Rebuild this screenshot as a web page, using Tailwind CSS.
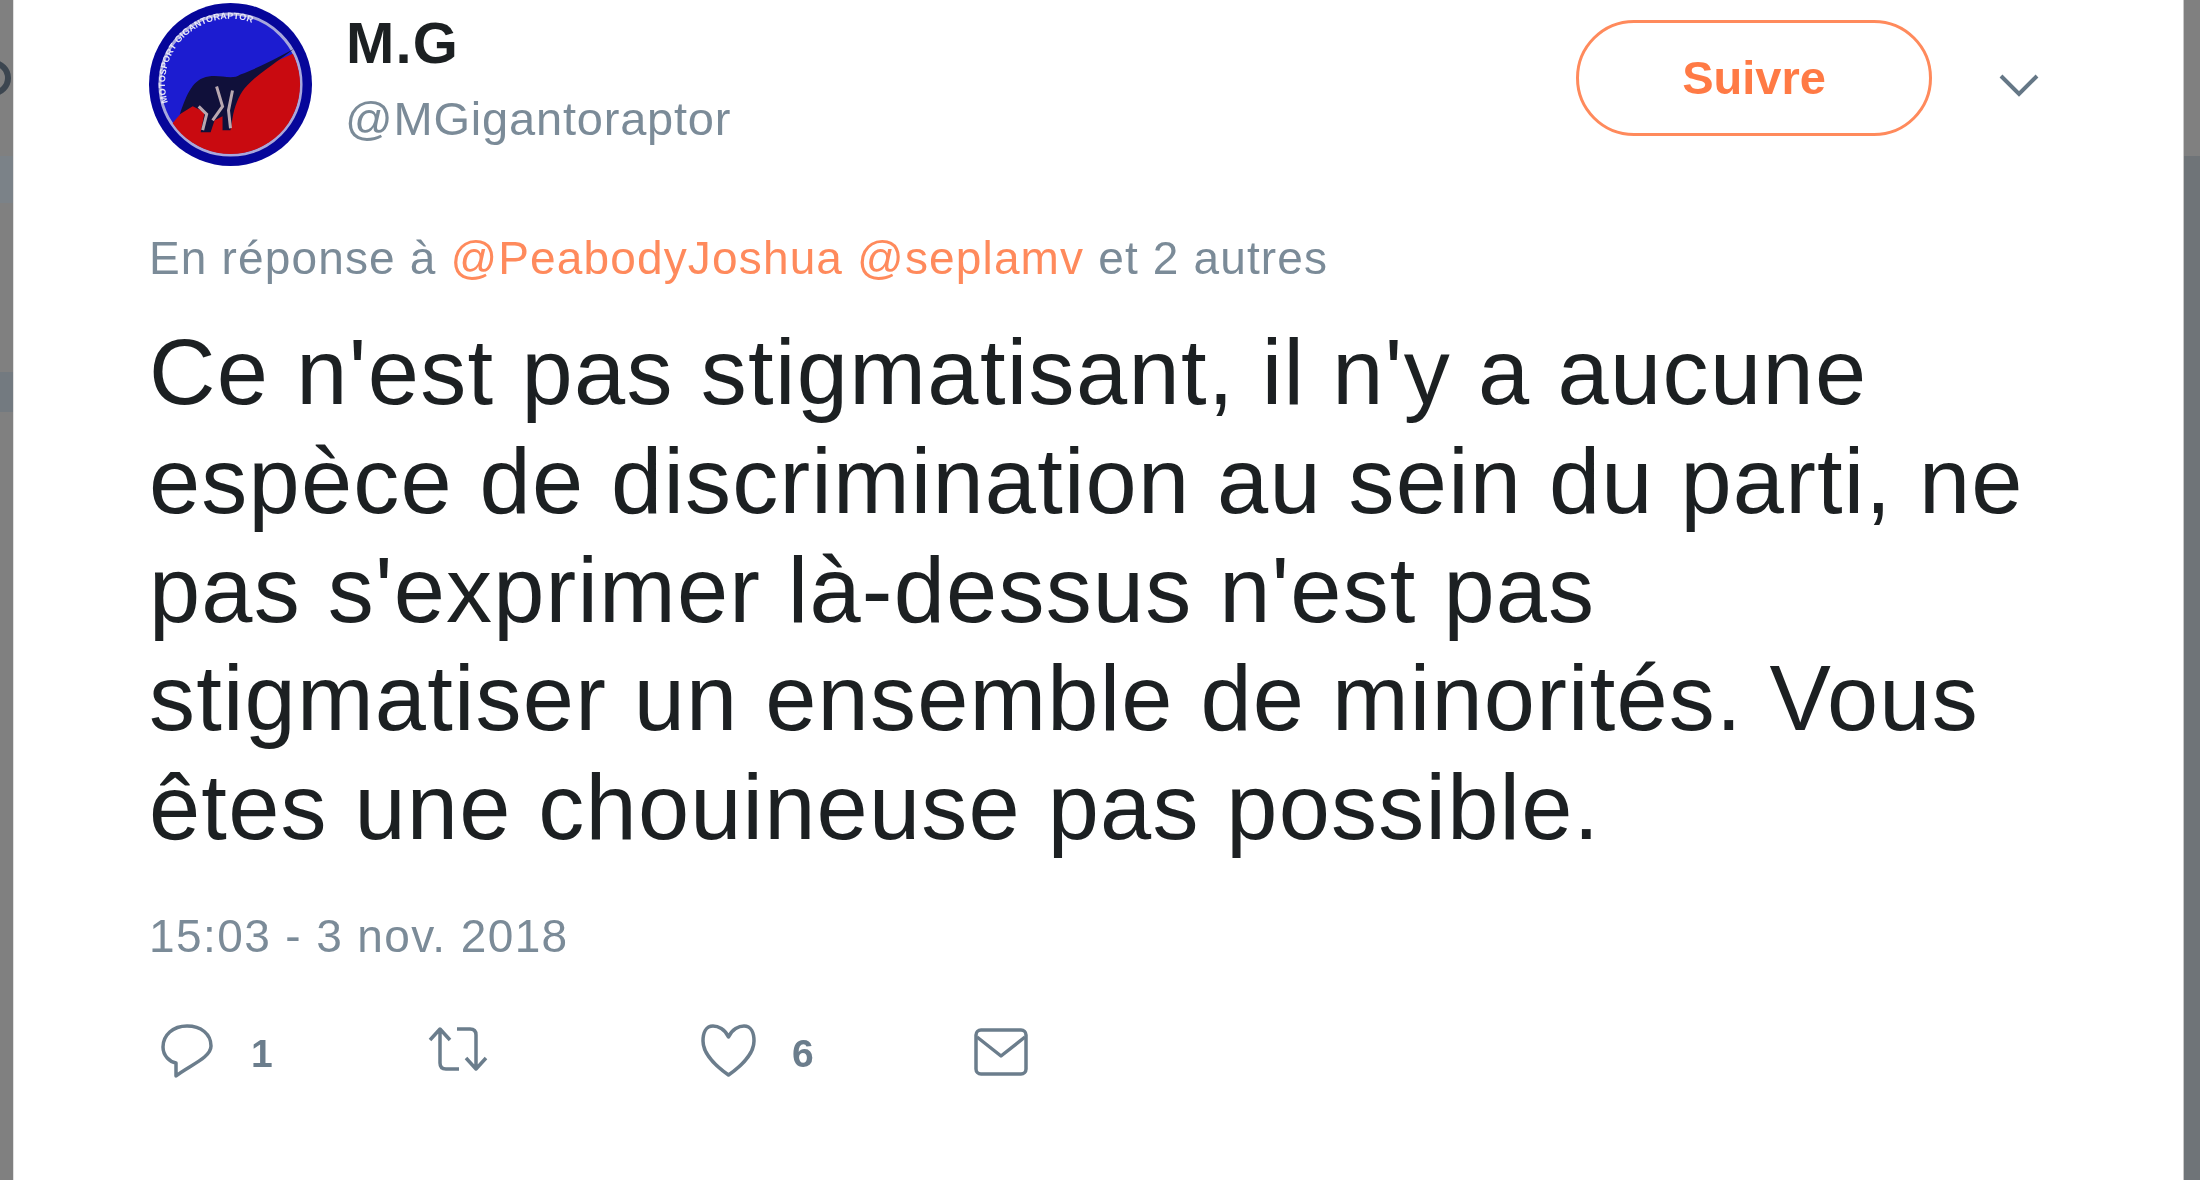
<!DOCTYPE html>
<html><head><meta charset="utf-8"><script src="https://cdn.jsdelivr.net/npm/@tailwindcss/browser@4"></script></head>
<body class="m-0 bg-[#808080] overflow-hidden font-['Liberation_Sans',Arial,sans-serif]">
<div class="w-[2200px] h-[1180px] flex blur-[0.7px]">
  <div class="w-[13px] shrink-0 flex flex-col bg-[#808080] overflow-hidden">
    <div class="h-[156px] relative">
      <div class="absolute left-[-25px] top-[60px] w-[36px] h-[36px] rounded-full border-[6px] border-[#3c4650]"></div>
    </div>
    <div class="h-[47px] bg-[#7b8288]"></div>
    <div class="h-[169px]"></div>
    <div class="h-[40px] bg-[#737a80]"></div>
  </div>
  <div class="w-[1px] shrink-0 bg-[#e0e0e0]"></div>
  <div class="w-[2169px] shrink-0 h-[1180px] bg-white pl-[135px] pr-[144px]">
    <div class="flex items-start h-[230px]">
      <svg class="w-[163px] h-[163px] mt-[3px] mr-[34px] shrink-0" viewBox="0 0 164 164">
        <defs>
          <clipPath id="c"><circle cx="82" cy="82" r="70"/></clipPath>
          <path id="arc" d="M19 100 A65 65 0 0 1 136 46" fill="none"/>
        </defs>
        <circle cx="82" cy="82" r="82" fill="#06069a"/>
        <circle cx="82" cy="82" r="71" fill="#1c1cd0" stroke="#a8a8dc" stroke-width="3"/>
        <g clip-path="url(#c)">
          <path d="M0 150 L27 117 L60 80 L91 75 L147 50 L164 44 V164 H0Z" fill="#c90a10"/>
        </g>
        <path d="M31 112 C38 92 44 76 60 74 C72 72 84 78 92 72 C108 66 128 56 146 46 C128 60 108 72 96 86 C90 94 86 104 84 116 L82 128 L74 128 L74 114 L66 118 L62 130 L52 130 L56 110 L44 104Z" fill="#10103a"/>
        <path d="M50 104 L58 112 L54 128 M68 84 L74 104 L64 118 M84 88 L80 108 L82 126" stroke="#b8a8b0" stroke-width="3" fill="none"/>
        <text font-size="9" font-weight="700" fill="#e8e8f8" letter-spacing="0.2" font-family="Liberation Sans"><textPath href="#arc">MOTOSPORT GIGANTORAPTOR</textPath></text>
      </svg>
      <div class="flex-1">
        <div class="text-[58px] leading-[64px] font-bold text-[#1c2022] mt-[11px] tracking-[1.2px]">M.G</div>
        <div class="text-[47px] leading-[56px] text-[#7b8b98] mt-[16px] tracking-[0.8px] ml-[-1px]">@MGigantoraptor</div>
      </div>
      <div class="w-[356px] h-[116px] mt-[20px] rounded-full border-[3px] border-[#ff8a5c] text-[#ff7a45] font-bold text-[47px] flex items-center justify-center">Suivre</div>
      <svg class="w-[40px] h-[26px] ml-[67px] mt-[72px] shrink-0" viewBox="0 0 40 26" fill="none" stroke="#657786" stroke-width="4"><path d="M2 4 L20 22 L38 4"/></svg>
    </div>
    <div class="text-[46px] leading-[56px] text-[#7b8b98] tracking-[1.15px] whitespace-nowrap">En réponse à <span class="text-[#ff8a5c]">@PeabodyJoshua</span> <span class="text-[#ff8a5c]">@seplamv</span> et 2 autres</div>
    <div class="text-[92px] leading-[108.8px] text-[#1c2022] mt-[32px] tracking-[1.2px] whitespace-nowrap">
      <div class="tracking-[1.36px]">Ce n'est pas stigmatisant, il n'y a aucune</div>
      <div>espèce de discrimination au sein du parti, ne</div>
      <div>pas s'exprimer là-dessus n'est pas</div>
      <div>stigmatiser un ensemble de minorités. Vous</div>
      <div>êtes une chouineuse pas possible.</div>
    </div>
    <div class="text-[46px] leading-[56px] text-[#7b8b98] mt-[46px] tracking-[1.4px]">15:03 - 3 nov. 2018</div>
    <div class="flex items-start mt-[60px] text-[#6b7d8c]">
      <div class="w-[267px] pl-[12px] flex items-center h-[54px]">
        <svg class="w-[52px] h-[54px]" viewBox="0 0 52 54" fill="none" stroke="currentColor" stroke-width="3.5" stroke-linejoin="round"><path d="M26 2 C12 2 2 11 2 23 C2 32 9 38 15 39 L15 52 C27 42 50 34 50 22 C50 10 40 2 26 2Z"/></svg>
        <span class="text-[39px] font-bold ml-[38px] mt-[6px]">1</span>
      </div>
      <div class="w-[273px] pl-[12px] flex items-center h-[54px]">
        <svg class="w-[60px] h-[46px] mb-[4px]" viewBox="0 0 60 46" fill="none" stroke="currentColor" stroke-width="3.5" stroke-linejoin="round"><path d="M2 14 L12 3 L22 14 M12 3 V37 Q12 43 18 43 H31 M29 3 H42 Q48 3 48 9 V43 M38 32 L48 43 L58 32"/></svg>
      </div>
      <div class="w-[273px] pl-[12px] flex items-center h-[54px]">
        <svg class="w-[55px] h-[53px]" viewBox="0 0 55 53" fill="none" stroke="currentColor" stroke-width="3.5" stroke-linejoin="round"><path d="M27.5 13 C24 5 17 2 12 2 C5 2 2 9 2 17 C2 30 16 43 27.5 51 C39 43 53 30 53 17 C53 9 50 2 43 2 C38 2 31 5 27.5 13Z"/></svg>
        <span class="text-[39px] font-bold ml-[36px] mt-[6px]">6</span>
      </div>
      <div class="w-[273px] pl-[12px] flex items-center h-[54px]">
        <svg class="w-[54px] h-[48px] mt-[2px]" viewBox="0 0 54 48" fill="none" stroke="currentColor" stroke-width="3.5" stroke-linejoin="round"><rect x="2" y="2" width="50" height="44" rx="5"/><path d="M3 9 L27 28 L51 9"/></svg>
      </div>
    </div>
  </div>
  <div class="w-[1px] shrink-0 bg-[#c8c8c8]"></div>
  <div class="flex-1 flex flex-col">
    <div class="h-[156px] bg-[#808080]"></div>
    <div class="flex-1 bg-[#6f7478]"></div>
  </div>
</div>
</body></html>
